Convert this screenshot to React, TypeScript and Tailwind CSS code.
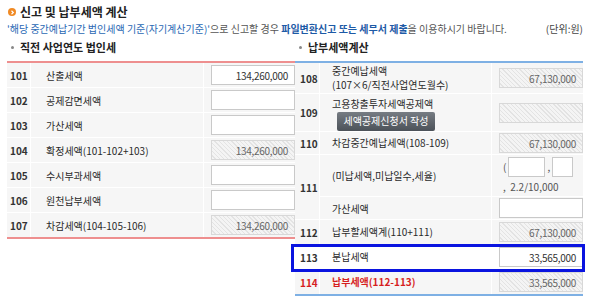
const hatch =
  "bg-[repeating-linear-gradient(45deg,#f4f4f4_0px,#f4f4f4_2px,#e3e3e3_2px,#e3e3e3_3px)]";

function Field({ value, disabled }: { value?: string; disabled?: boolean }) {
  return (
    <div
      className={`flex h-[20px] w-[84px] items-center justify-end border pr-[6px] text-[10px] tracking-[-0.3px] ${
        disabled ? `border-[#d8d8d8] text-[#666] ${hatch}` : "border-[#c9c9c9] bg-white text-[#333]"
      }`}
    >
      {value}
    </div>
  );
}

type Row = { no: string; label: string; value?: string; disabled?: boolean };

const prevYear: Row[] = [
  { no: "101", label: "산출세액", value: "134,260,000" },
  { no: "102", label: "공제감면세액" },
  { no: "103", label: "가산세액" },
  { no: "104", label: "확정세액(101-102+103)", value: "134,260,000", disabled: true },
  { no: "105", label: "수시부과세액" },
  { no: "106", label: "원천납부세액" },
  { no: "107", label: "차감세액(104-105-106)", value: "134,260,000", disabled: true },
];

function SectionTitle({ children }: { children: string }) {
  return (
    <div className="flex h-[20px] items-center pl-[4px] text-[11px] font-bold text-[#222]">
      <span className="mr-[6px] h-[3px] w-[3px] rounded-full bg-[#888]" />
      {children}
    </div>
  );
}

function LeftTable() {
  return (
    <div className="w-[290px]">
      <SectionTitle>직전 사업연도 법인세</SectionTitle>
      <div className="mt-[4px] border-y-2 border-[#ee8f8f]">
        {prevYear.map((r) => (
          <div key={r.no} className="flex h-[25px] border-b border-white bg-[#f6f6f6] last:h-[24px] last:border-b-0">
            <div className="flex w-[24px] items-center border-r border-white pl-[3px] text-[10px] font-bold text-[#333]">
              {r.no}
            </div>
            <div className="flex w-[173px] items-center border-r border-white pl-[15px] text-[10px] text-[#2a2a2a]">
              {r.label}
            </div>
            <div className="flex flex-1 items-center pl-[7px]">
              <Field value={r.value} disabled={r.disabled} />
            </div>
          </div>
        ))}
      </div>
    </div>
  );
}

function RCell({
  no,
  h,
  children,
  field,
  red,
  white,
}: {
  no: string;
  h: string;
  children: React.ReactNode;
  field: React.ReactNode;
  red?: boolean;
  white?: boolean;
}) {
  return (
    <div className={`flex ${h} border-b border-white ${white ? "bg-white" : "bg-[#f6f6f6]"}`}>
      <div
        className={`flex w-[25px] items-center border-r border-white pl-[5px] text-[10px] font-bold ${
          red ? "text-[#d61f1f]" : "text-[#333]"
        }`}
      >
        {no}
      </div>
      <div
        className={`flex w-[172px] flex-col justify-center border-r border-white pl-[12px] text-[10px] leading-[14px] ${
          red ? "font-bold text-[#d61f1f]" : "text-[#2a2a2a]"
        }`}
      >
        {children}
      </div>
      <div className="flex flex-1 items-center pl-[7px]">{field}</div>
    </div>
  );
}

function RightTable() {
  return (
    <div className="w-[290px]">
      <SectionTitle>납부세액계산</SectionTitle>
      <div className="mt-[4px] border-y-2 border-[#7eb0e4]">
        <RCell no="108" h="h-[31px]" field={<Field value="67,130,000" disabled />}>
          <span>중간예납세액</span>
          <span>(107×6/직전사업연도월수)</span>
        </RCell>
        <RCell no="109" h="h-[38px]" field={<Field disabled />}>
          <span className="mt-[2px]">고용창출투자세액공제액</span>
          <span className="mt-[1px] ml-[5px] flex h-[19px] w-[98px] items-center justify-center rounded-[2px] bg-gradient-to-b from-[#767c83] to-[#4c5259] text-[10px] text-white">
            세액공제신청서 작성
          </span>
        </RCell>
        <RCell no="110" h="h-[23px]" field={<Field value="67,130,000" disabled />}>
          차감중간예납세액(108-109)
        </RCell>
        <div className="flex h-[65px] border-b border-white bg-[#f6f6f6]">
          <div className="flex w-[25px] items-center border-r border-white pl-[5px] text-[10px] font-bold text-[#333]">
            111
          </div>
          <div className="flex flex-1 flex-col">
            <div className="flex h-[42px] border-b border-white">
              <div className="flex w-[172px] items-center border-r border-white pl-[12px] text-[10px] text-[#2a2a2a]">
                (미납세액,미납일수,세율)
              </div>
              <div className="flex flex-1 flex-col pl-[11px] pt-[1px] text-[10px] text-[#555]">
                <div className="flex h-[21px] items-center">
                  <span className="mr-[2px]">(</span>
                  <span className="h-[20px] w-[37px] border border-[#c9c9c9] bg-white" />
                  <span className="mx-[2px]">,</span>
                  <span className="h-[20px] w-[21px] border border-[#c9c9c9] bg-white" />
                </div>
                <div className="mt-[3px] flex h-[13px] items-center">,&nbsp; 2.2/10,000</div>
              </div>
            </div>
            <div className="flex h-[22px]">
              <div className="flex w-[172px] items-center border-r border-white pl-[12px] text-[10px] text-[#2a2a2a]">
                가산세액
              </div>
              <div className="flex flex-1 items-center pl-[7px]">
                <Field />
              </div>
            </div>
          </div>
        </div>
        <RCell no="112" h="h-[25px]" field={<Field value="67,130,000" disabled />}>
          납부할세액계(110+111)
        </RCell>
        <div className="relative">
          <RCell no="113" h="h-[25px]" white field={<Field value="33,565,000" />}>
            분납세액
          </RCell>
          <div className="absolute -top-[1px] -bottom-[2px] -left-[4px] -right-[2px] border-[3px] border-[#0a14e0]" />
        </div>
        <RCell no="114" h="h-[24px] border-b-0" red field={<Field value="33,565,000" disabled />}>
          납부세액(112-113)
        </RCell>
      </div>
    </div>
  );
}

export default function App() {
  return (
    <div className="h-[297px] w-[590px] bg-white px-[7px] pt-[4px] font-['Noto_Sans_CJK_KR',sans-serif]">
      <div className="flex h-[16px] items-center gap-[4px] pl-[1px]">
        <span className="flex h-[8px] w-[8px] items-center justify-center rounded-full bg-[#f08a24]">
          <svg width="5" height="5" viewBox="0 0 5 5">
            <path d="M1.5 0.8 L3.3 2.5 L1.5 4.2" stroke="white" strokeWidth="1.2" fill="none" />
          </svg>
        </span>
        <span className="text-[12px] font-bold text-[#222]">신고 및 납부세액 계산</span>
      </div>
      <div className="flex h-[17px] items-center justify-between text-[10px]">
        <p className="text-[#555]">
          <span className="text-[#2a68b4]">'해당 중간예납기간 법인세액 기준(자기계산기준)'</span>으로 신고할 경우{" "}
          <span className="font-bold text-[#1d5aa6]">파일변환신고 또는 세무서 제출</span>을 이용하시기 바랍니다.
        </p>
        <span className="text-[#444]">(단위:원)</span>
      </div>
      <div className="flex items-start">
        <LeftTable />
        <RightTable />
      </div>
    </div>
  );
}
